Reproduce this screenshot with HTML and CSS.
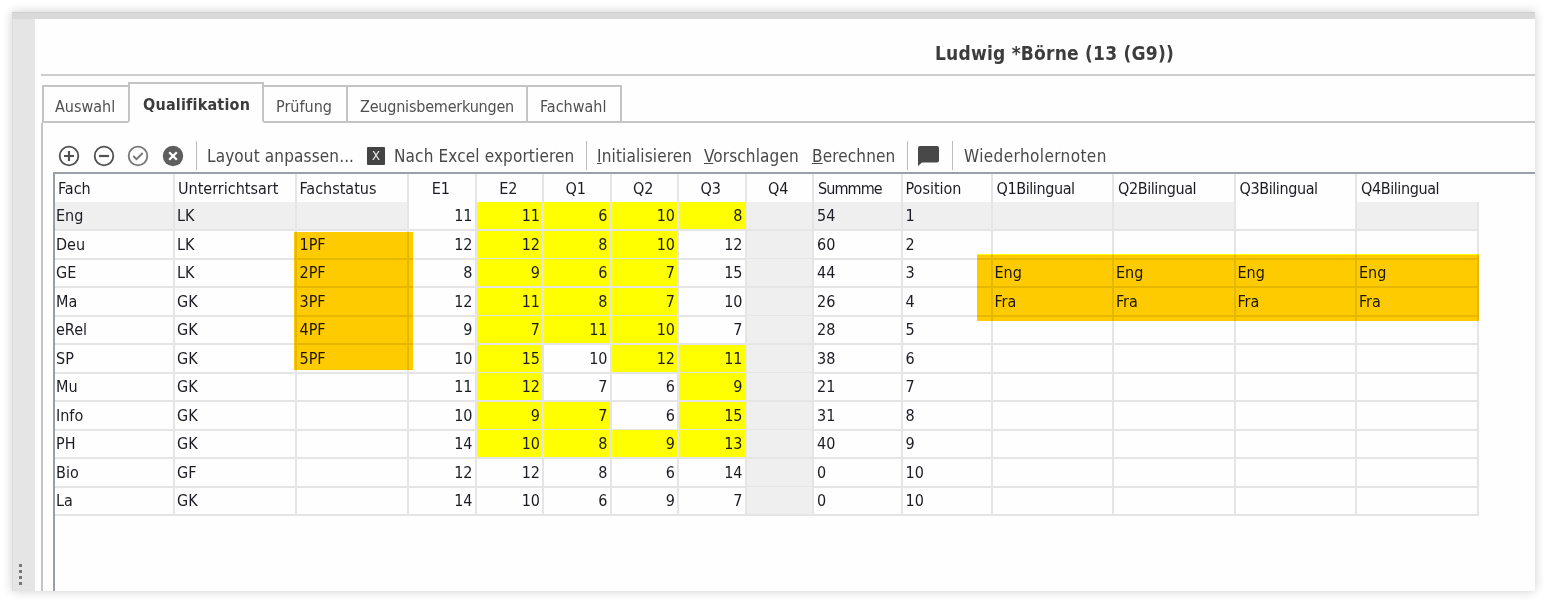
FILE: index.html
```html
<!DOCTYPE html>
<html lang="de">
<head>
<meta charset="utf-8">
<title>Qualifikation</title>
<link rel="stylesheet" href="styles.css">
</head>
<body>
<div class="window">
  <div class="topbar"></div>
  <div class="body">
    <aside class="splitter"><i></i><i></i><i></i><i></i></aside>
    <main class="content">
      <h1 class="title">Ludwig *Börne (13 (G9))</h1>
      <nav class="tabs">
        <span class="tab t1">Auswahl</span><span class="tab active t2">Qualifikation</span><span class="tab t3">Prüfung</span><span class="tab t4">Zeugnisbemerkungen</span><span class="tab t5">Fachwahl</span><span class="rest"></span>
      </nav>
      <section class="panel">
        <div class="toolbar">
          <svg class="ico" viewBox="0 0 22 22"><circle cx="11" cy="11" r="9.3"/><path d="M11 6v10M6 11h10" stroke-width="2.2"/></svg>
          <svg class="ico" viewBox="0 0 22 22"><circle cx="11" cy="11" r="9.3"/><path d="M6 11h10" stroke-width="2.2"/></svg>
          <svg class="ico light" viewBox="0 0 22 22"><circle cx="11" cy="11" r="9.3"/><path d="M6.3 11l3.2 3.2 6.2-6.2" stroke-width="1.9"/></svg>
          <svg class="ico solid" viewBox="0 0 22 22"><circle cx="11" cy="11" r="10.2"/><path d="M7.2 7.2l7.6 7.6M14.8 7.2l-7.6 7.6" stroke-width="2.3"/></svg>
          <i class="sep"></i>
          <span class="btn b1">Layout anpassen...</span>
          <span class="xls">X</span>
          <span class="btn b2">Nach Excel exportieren</span>
          <i class="sep"></i>
          <span class="btn b3"><u>I</u>nitialisieren</span>
          <span class="btn b4"><u>V</u>orschlagen</span>
          <span class="btn b5"><u>B</u>erechnen</span>
          <i class="sep"></i>
          <svg class="note" viewBox="0 0 21 20"><path d="M2 0h17q2 0 2 2v12.500q0 2-2 2H4L0 20V2q0-2 2-2z"/></svg>
          <i class="sep"></i>
          <span class="btn b6">Wiederholernoten</span>
        </div>
        <div class="table">
          <div class="row head"><b>Fach</b><b>Unterrichtsart</b><b>Fachstatus</b><b>E1</b><b>E2</b><b>Q1</b><b>Q2</b><b>Q3</b><b>Q4</b><b>Summme</b><b>Position</b><b>Q1Bilingual</b><b>Q2Bilingual</b><b>Q3Bilingual</b><b>Q4Bilingual</b></div>
          <div class="row current"><b>Eng</b><b>LK</b><b></b><b class="w">11</b><b class="y">11</b><b class="y">6</b><b class="y">10</b><b class="y">8</b><b></b><b>54</b><b>1</b><b></b><b></b><b class="w"></b><b></b></div>
          <div class="row"><b>Deu</b><b>LK</b><b>1PF</b><b>12</b><b class="y">12</b><b class="y">8</b><b class="y">10</b><b>12</b><b></b><b>60</b><b>2</b><b></b><b></b><b></b><b></b></div>
          <div class="row"><b>GE</b><b>LK</b><b>2PF</b><b>8</b><b class="y">9</b><b class="y">6</b><b class="y">7</b><b>15</b><b></b><b>44</b><b>3</b><b>Eng</b><b>Eng</b><b>Eng</b><b>Eng</b></div>
          <div class="row"><b>Ma</b><b>GK</b><b>3PF</b><b>12</b><b class="y">11</b><b class="y">8</b><b class="y">7</b><b>10</b><b></b><b>26</b><b>4</b><b>Fra</b><b>Fra</b><b>Fra</b><b>Fra</b></div>
          <div class="row"><b>eRel</b><b>GK</b><b>4PF</b><b>9</b><b class="y">7</b><b class="y">11</b><b class="y">10</b><b>7</b><b></b><b>28</b><b>5</b><b></b><b></b><b></b><b></b></div>
          <div class="row"><b>SP</b><b>GK</b><b>5PF</b><b>10</b><b class="y">15</b><b>10</b><b class="y">12</b><b class="y">11</b><b></b><b>38</b><b>6</b><b></b><b></b><b></b><b></b></div>
          <div class="row"><b>Mu</b><b>GK</b><b></b><b>11</b><b class="y">12</b><b>7</b><b>6</b><b class="y">9</b><b></b><b>21</b><b>7</b><b></b><b></b><b></b><b></b></div>
          <div class="row"><b>Info</b><b>GK</b><b></b><b>10</b><b class="y">9</b><b class="y">7</b><b>6</b><b class="y">15</b><b></b><b>31</b><b>8</b><b></b><b></b><b></b><b></b></div>
          <div class="row"><b>PH</b><b>GK</b><b></b><b>14</b><b class="y">10</b><b class="y">8</b><b class="y">9</b><b class="y">13</b><b></b><b>40</b><b>9</b><b></b><b></b><b></b><b></b></div>
          <div class="row"><b>Bio</b><b>GF</b><b></b><b>12</b><b>12</b><b>8</b><b>6</b><b>14</b><b></b><b>0</b><b>10</b><b></b><b></b><b></b><b></b></div>
          <div class="row"><b>La</b><b>GK</b><b></b><b>14</b><b>10</b><b>6</b><b>9</b><b>7</b><b></b><b>0</b><b>10</b><b></b><b></b><b></b><b></b></div>
          <div class="mark status"></div>
          <div class="mark bilingual"></div>
        </div>
      </section>
    </main>
  </div>
</div>
</body>
</html>
```
FILE: styles.css
```css
* { box-sizing: border-box; }
body {
  margin: 0;
  width: 1547px;
  height: 603px;
  padding: 12px;
  overflow: hidden;
  background: #fff;
  font-family: "DejaVu Sans Condensed", "DejaVu Sans", sans-serif;
  font-stretch: condensed;
  font-size: 16px;
  color: #1c1c24;
}
.window {
  width: 1523px;
  height: 579px;
  display: flex;
  flex-direction: column;
  background: #fefefe;
  box-shadow: 0 0 10px rgba(0, 0, 0, .2);
}
.topbar { height: 7px; background: #d9d9d9; border-top: 1px solid #d0d0d0; }
.body { flex: 1; display: flex; min-height: 0; }
.splitter {
  width: 23px;
  background: #e5e5e5;
  border-left: 1px solid #dcdcdc;
  display: flex;
  flex-direction: column;
  justify-content: flex-end;
  gap: 3px;
  padding: 0 0 6px 6px;
}
.splitter i { width: 3px; height: 3px; background: #777; }
.content { flex: 1; min-width: 0; padding-left: 6px; display: flex; flex-direction: column; }
.title {
  margin: 0;
  height: 57px;
  padding-left: 894px;
  border-bottom: 2px solid #cdcdcd;
  font-size: 19px;
  line-height: 69px;
  letter-spacing: .22px;
  white-space: nowrap;
  color: #3c3c3c;
}
.tabs { display: flex; align-items: flex-end; height: 47px; padding-left: 1px; white-space: nowrap; color: #505050; }
.tab { height: 38px; border: 2px solid #c4c4c4; border-left-width: 0; padding-left: 12px; line-height: 39px; }
.t1 { width: 86px; border-left-width: 2px; padding-left: 11px; border-right: 0; }
.t2 { width: 136px; }
.t3 { width: 84px; }
.t4 { width: 180px; letter-spacing: -.2px; }
.t5 { width: 94px; }
.tab.active { height: 41px; border-left-width: 2px; border-bottom-color: #fefefe; font-weight: bold; color: #3c3c3c; letter-spacing: .2px; line-height: 41px; padding-left: 13px; }
.rest { flex: 1; height: 2px; background: #c6c6c6; }
.panel { flex: 1; border-left: 2px solid #c4c4c4; padding: 17px 0 0 10px; display: flex; flex-direction: column; }
.toolbar { height: 32px; display: flex; align-items: center; padding: 0 0 1px 5px; font-size: 17px; color: #484848; white-space: nowrap; }
.btn, .xls, .toolbar svg, .sep { flex: none; }
.btn { letter-spacing: .14px; }
.ico { width: 22px; height: 22px; margin-right: 12.500px; fill: none; stroke: #505050; stroke-width: 1.800; }
.light { stroke: #777; }
.solid circle { fill: #5e5e5e; stroke: none; }
.solid path { stroke: #fff; }
.sep { width: 1px; height: 29px; background: #bbb; margin-right: 10px; }
.b1 { width: 160px; }
.b2 { width: 192px; }
.b3 { width: 107px; }
.b4 { width: 108px; }
.b5 { width: 95px; }
.b6 { padding-left: 1px; letter-spacing: .4px; }
.xls { width: 18px; height: 18px; margin-right: 9px; border-radius: 1px; background: #444; color: #eee; font-size: 13px; line-height: 18px; text-align: center; }
.note { width: 21px; height: 20px; margin-right: 13px; fill: #484848; }
.table { position: relative; flex: 1; border: solid #9b9fa6; border-width: 2px 0 0 2px; }
.row {
  display: grid;
  grid-template-columns: 120px 121.500px 112.500px 67.500px 67.500px 67.500px 67.500px 67.500px 67.500px 88.500px 90px 121.500px 121.500px 121.500px 121.500px;
  width: 1424px;
  height: 28.500px;
}
.row b {
  font-weight: normal;
  border: solid #e5e5e5;
  border-width: 0 2px 2px 0;
  line-height: 27px;
  padding-left: 1px;
  white-space: nowrap;
}
.row b:nth-child(2), .row b:nth-child(n+12) { padding-left: 2px; }
.row b:nth-child(3), .row b:nth-child(10), .row b:nth-child(11) { padding-left: 3px; }
.row b:nth-child(n+4):nth-child(-n+8) { text-align: right; padding: 0 2px 0 0; }
.row b:nth-child(9), .current b { background: #efefef; }
.row .y { background: #ff0; }
.row .w { background: #fefefe; }
.row.head { height: 28px; }
.row.head b { border-bottom: 0; background: none; line-height: 29px; padding-left: 3px; }
.row.head b:nth-child(n+4):nth-child(-n+9) { text-align: center; padding: 0 2px 0 0; }
.row.head b:nth-child(10) { letter-spacing: -.9px; padding-left: 4px; }
.row.head b:nth-child(n+12) { letter-spacing: -.4px; padding-left: 4px; }
.row.head b:last-child { border-right-color: transparent; }
.mark { position: absolute; background: #fc0; mix-blend-mode: multiply; }
.status { left: 239px; top: 58px; width: 119px; height: 138px; }
.bilingual { left: 922px; top: 80px; width: 502px; height: 67px; border-top: 1px solid #ff0; }
```
